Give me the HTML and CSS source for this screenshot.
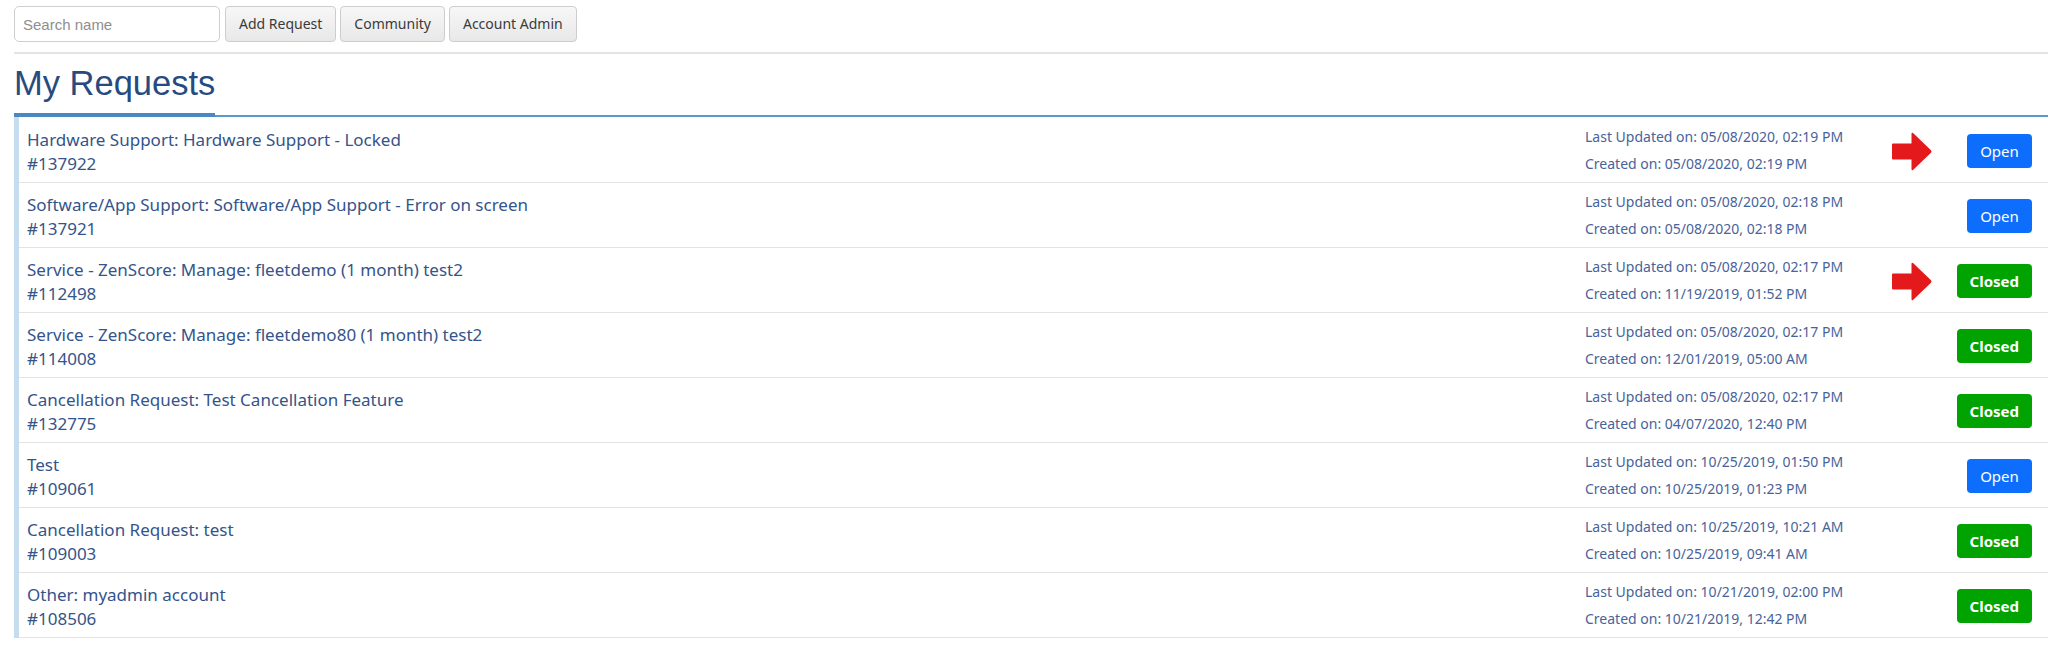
FILE: index.html
```html
<!DOCTYPE html>
<html>
<head>
<meta charset="utf-8">
<link rel="stylesheet" href="styles.css">
</head>
<body>
<div class="page">
  <div class="toolbar">
    <input class="search" type="text" placeholder="Search name">
    <button class="tbtn">Add Request</button>
    <button class="tbtn">Community</button>
    <button class="tbtn">Account Admin</button>
  </div>
  <div class="rule"></div>
  <h1 class="title">My Requests</h1>
  <div class="tabline"><div class="tab-active"></div><div class="tab-rest"></div></div>
  <div class="list">
    <div class="row">
      <div class="info"><div class="name">Hardware Support: Hardware Support - Locked</div><div class="num">#137922</div></div>
      <div class="dates"><div>Last Updated on: 05/08/2020, 02:19 PM</div><div>Created on: 05/08/2020, 02:19 PM</div></div>
      <div class="mark"><svg class="arrow" viewBox="0 0 40 39" width="40" height="39"><path d="M1 11.5 H19.5 V1.5 Q20 0 21.3 1.2 L39 18.3 Q40 19.5 39 20.7 L21.3 37.8 Q20 39 19.5 37.5 V27.5 H1 Q0 27.5 0 26.5 V12.5 Q0 11.5 1 11.5 Z" fill="#e3191b"/></svg></div>
      <div class="act"><span class="status open">Open</span></div>
    </div>
    <div class="row">
      <div class="info"><div class="name">Software/App Support: Software/App Support - Error on screen</div><div class="num">#137921</div></div>
      <div class="dates"><div>Last Updated on: 05/08/2020, 02:18 PM</div><div>Created on: 05/08/2020, 02:18 PM</div></div>
      <div class="mark"></div>
      <div class="act"><span class="status open">Open</span></div>
    </div>
    <div class="row">
      <div class="info"><div class="name">Service - ZenScore: Manage: fleetdemo (1 month) test2</div><div class="num">#112498</div></div>
      <div class="dates"><div>Last Updated on: 05/08/2020, 02:17 PM</div><div>Created on: 11/19/2019, 01:52 PM</div></div>
      <div class="mark"><svg class="arrow" viewBox="0 0 40 39" width="40" height="39"><path d="M1 11.5 H19.5 V1.5 Q20 0 21.3 1.2 L39 18.3 Q40 19.5 39 20.7 L21.3 37.8 Q20 39 19.5 37.5 V27.5 H1 Q0 27.5 0 26.5 V12.5 Q0 11.5 1 11.5 Z" fill="#e3191b"/></svg></div>
      <div class="act"><span class="status closed">Closed</span></div>
    </div>
    <div class="row">
      <div class="info"><div class="name">Service - ZenScore: Manage: fleetdemo80 (1 month) test2</div><div class="num">#114008</div></div>
      <div class="dates"><div>Last Updated on: 05/08/2020, 02:17 PM</div><div>Created on: 12/01/2019, 05:00 AM</div></div>
      <div class="mark"></div>
      <div class="act"><span class="status closed">Closed</span></div>
    </div>
    <div class="row">
      <div class="info"><div class="name">Cancellation Request: Test Cancellation Feature</div><div class="num">#132775</div></div>
      <div class="dates"><div>Last Updated on: 05/08/2020, 02:17 PM</div><div>Created on: 04/07/2020, 12:40 PM</div></div>
      <div class="mark"></div>
      <div class="act"><span class="status closed">Closed</span></div>
    </div>
    <div class="row">
      <div class="info"><div class="name">Test</div><div class="num">#109061</div></div>
      <div class="dates"><div>Last Updated on: 10/25/2019, 01:50 PM</div><div>Created on: 10/25/2019, 01:23 PM</div></div>
      <div class="mark"></div>
      <div class="act"><span class="status open">Open</span></div>
    </div>
    <div class="row">
      <div class="info"><div class="name">Cancellation Request: test</div><div class="num">#109003</div></div>
      <div class="dates"><div>Last Updated on: 10/25/2019, 10:21 AM</div><div>Created on: 10/25/2019, 09:41 AM</div></div>
      <div class="mark"></div>
      <div class="act"><span class="status closed">Closed</span></div>
    </div>
    <div class="row">
      <div class="info"><div class="name">Other: myadmin account</div><div class="num">#108506</div></div>
      <div class="dates"><div>Last Updated on: 10/21/2019, 02:00 PM</div><div>Created on: 10/21/2019, 12:42 PM</div></div>
      <div class="mark"></div>
      <div class="act"><span class="status closed">Closed</span></div>
    </div>
  </div>
</div>
</body>
</html>
```

FILE: styles.css
```css
html, body {
  margin: 0;
  padding: 0;
  background: #ffffff;
}
.page {
  padding-left: 14px;
  font-family: "Noto Sans", "Open Sans", sans-serif;
}
.toolbar {
  display: flex;
  gap: 4px;
  padding-top: 6px;
  height: 36px;
}
.search {
  box-sizing: border-box;
  width: 206px;
  height: 36px;
  margin: 0 1px 0 0;
  padding: 0 8px;
  border: 1px solid #cfcfcf;
  border-radius: 5px;
  font-family: "Liberation Sans", Arial, sans-serif;
  font-size: 15px;
  color: #333;
  background: #fff;
  outline: none;
}
.search::placeholder {
  color: #8e8e8e;
}
.tbtn {
  box-sizing: border-box;
  height: 36px;
  padding: 0 13px;
  margin: 0;
  border: 1px solid #cdcdcd;
  border-radius: 4px;
  background: linear-gradient(#f7f7f7, #e8e8e8);
  font-family: "Noto Sans", sans-serif;
  font-size: 14px;
  color: #3a3a3a;
  line-height: 34px;
}
.rule {
  height: 2px;
  margin-top: 10px;
  background: #e4e4e4;
}
.title {
  margin: 9px 0 10px 0;
  font-family: "Liberation Sans", Arial, sans-serif;
  font-weight: normal;
  font-size: 34.5px;
  line-height: 40px;
  color: #274b80;
}
.tabline {
  display: flex;
  align-items: flex-end;
  height: 4px;
}
.tab-active {
  width: 201px;
  height: 4px;
  background: #4a88c2;
}
.tab-rest {
  flex: 1;
  height: 2px;
  background: #5b98cf;
}
.list {
  border-left: 5px solid #c6dcef;
  padding-top: 1px;
}
.row {
  box-sizing: border-box;
  height: 65px;
  border-bottom: 1px solid #e3e3e3;
  display: grid;
  grid-template-columns: 1fr 307px 40px 100px;
  padding-right: 16px;
  align-items: start;
}
.info {
  padding: 10px 0 0 8px;
  font-size: 17px;
  line-height: 24px;
  color: #34548a;
}
.dates {
  padding-top: 6px;
  font-size: 14px;
  line-height: 26.5px;
  color: #48639a;
}
.mark {
  padding-top: 14px;
  height: 39px;
}
.arrow {
  display: block;
}
.act {
  display: flex;
  justify-content: flex-end;
  padding-top: 16px;
}
.status {
  box-sizing: border-box;
  height: 34px;
  padding: 0 13px;
  border-radius: 4px;
  color: #ffffff;
  font-size: 15px;
  line-height: 34px;
}
.open {
  background: #0d6efd;
  min-width: 65px;
  text-align: center;
}
.closed {
  background: #00a300;
  font-weight: bold;
  min-width: 75px;
  text-align: center;
}
```
